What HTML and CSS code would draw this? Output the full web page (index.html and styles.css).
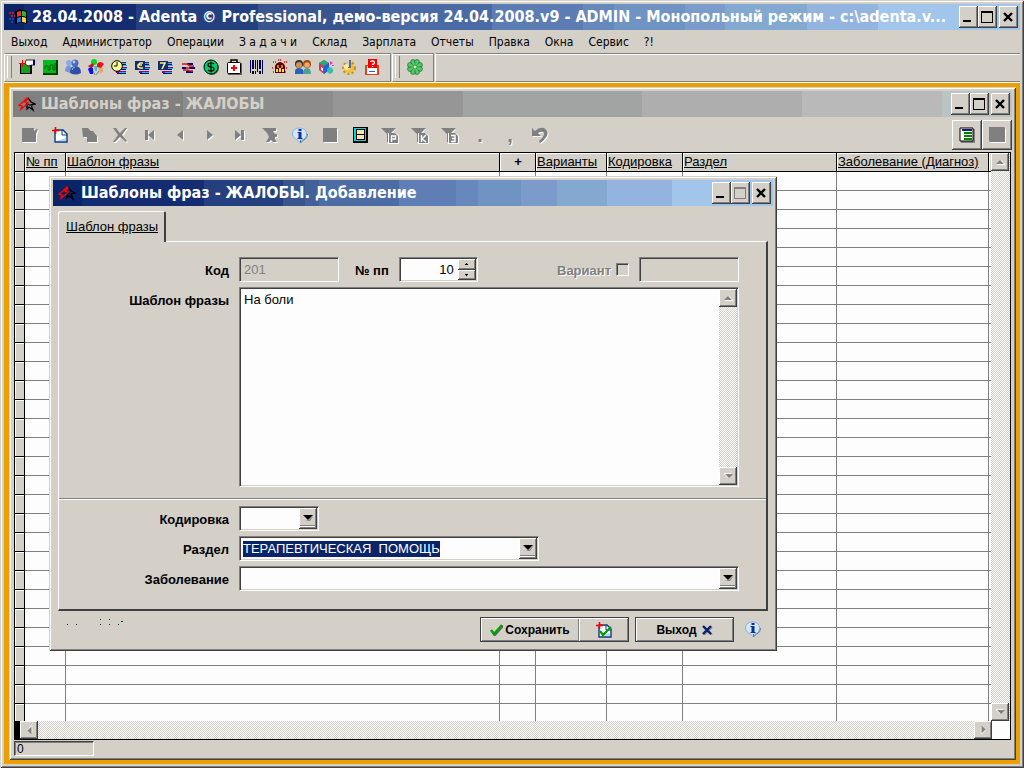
FILE: index.html
```html
<!DOCTYPE html>
<html lang="ru">

<head>
    <meta charset="utf-8">
    <title>Adenta Professional</title>
    <link rel="stylesheet" href="styles.css">
</head>

<body>

<svg class="defs" aria-hidden="true">
    <symbol id="i-min" viewBox="0 0 19 22"><path d="M4 14h8v2H4z"/></symbol>
    <symbol id="i-max" viewBox="0 0 19 22"><path d="M3 5h12v12H3zM4 7v9h10V7z" fill-rule="evenodd"/></symbol>
    <symbol id="i-close" viewBox="0 0 19 22"><path d="M5 7l8 8M13 7l-8 8" stroke="#000" stroke-width="2.4"/></symbol>
    <symbol id="i-logo" viewBox="0 0 18 16"><path d="M10 2l3 4 4 2-4 1 2 5-4-3-2 2V8l3 1" fill="none" stroke="#000" stroke-width="1.3"/><path d="M9 2L5 6 1 9l3 1-1 3 4-3 3-3-3-1 3-3z" fill="none" stroke="#f00" stroke-width="1.4"/></symbol>
    <symbol id="i-up" viewBox="0 0 9 6"><path d="M1 5l4-4 4 4v1H2z" fill="#fff"/><path d="M0 5l4-4 4 4z" fill="#808080"/></symbol>
    <symbol id="i-drop" viewBox="0 0 11 6"><path d="M2 6l4-1 5-5-4 6z" fill="#808080"/><path d="M0 0h10L5 5z"/></symbol>
    <symbol id="i-info" viewBox="0 0 17 17"><path d="M8 1C3 1 1 4 1 7s2 5 5 6l3 3v-3c4 0 6-3 6-6s-2-6-7-6z" fill="#d4e6f8" stroke="#8ab0d8"/><path d="M9 13v3l3-3c3-1 4-4 4-6" fill="none" stroke="#4d7dab"/><path d="M7 2h3v2H7zM6 5h4v6h1v1H6v-1h1V6H6z" fill="#0b2f9c"/></symbol>
    <symbol id="i-newdoc" viewBox="0 0 16 16"><path d="M3 3h8l4 4v8H3z" fill="#fff" stroke="#083c82" stroke-width="1.4"/><path d="M10 3v5h5" fill="none" stroke="#083c82"/><path d="M4 14h10v-3z" fill="#b8d4f0"/><path d="M0 3h7v1H0zM3 0h1v7H3z" fill="#f00" stroke="#f00" stroke-width=".6"/></symbol>
    <symbol id="i-funnel" viewBox="0 0 18 17"><path d="M2 2h13l-5 6v3H8V8z" fill="#fff"/><path d="M0 1h15L9 7v8H6V7z" fill="#808080"/><path d="M7 6h8l3 3v8H7z" fill="#fff"/><path d="M8 6h6l3 3v7H8z" fill="#808080"/></symbol>
    <symbol id="i-stripes" viewBox="0 0 16 16"><path d="M7 3h8v2H7zM6 8h10v2H6zM5 12h10v2H5z" fill="#808"/><path d="M8 4h7v1H8zM8 9h8v1H8zM8 13h7v1H8zM7 6h9v1H7z" fill="#00c8d8"/><path d="M8 5h7v1H8zM8 10h7v1H8zM6 14h9v1H6z" fill="#000080"/></symbol>
</svg>

<div class="window app">
    <div class="title title-app">
        <svg class="title-icon" viewBox="0 0 18 16"><path d="M6 2q5-3 12 0v13q-6-3-12 0z"/><path d="M8 3q2-1 4-1v5q-2 0-4 1z" fill="#f03818"/><path d="M13 2q2 0 4 1v5q-2-1-4-1z" fill="#20b840"/><path d="M8 9q2-1 4-1v5q-2 0-4 1z" fill="#2868f0"/><path d="M13 8q2 0 4 1v5q-2-1-4-1z" fill="#f8d820"/><path d="M0 3h2v2H0zM3 3h2v2H3zM2 6h2v2H2zM5 6h1v2H5z" fill="#b02020"/><path d="M0 9h2v2H0zM3 9h2v2H3zM2 12h2v2H2z" fill="#2040b0"/></svg>
        <h1>28.04.2008 - Adenta © Professional, демо-версия 24.04.2008.v9 - ADMIN - Монопольный режим - c:\adenta.v...</h1>
        <div class="title-buttons">
            <button aria-label="Свернуть"><svg><use href="#i-min"/></svg></button>
            <button aria-label="Развернуть"><svg><use href="#i-max"/></svg></button>
            <button class="close" aria-label="Закрыть"><svg><use href="#i-close"/></svg></button>
        </div>
    </div>

    <nav class="menu">
        <button>Выход</button>
        <button>Администратор</button>
        <button>Операции</button>
        <button>З а д а ч и</button>
        <button>Склад</button>
        <button>Зарплата</button>
        <button>Отчеты</button>
        <button>Правка</button>
        <button>Окна</button>
        <button>Сервис</button>
        <button>?!</button>
    </nav>

    <div class="bars">
        <div class="bar">
            <button aria-label="Выбор"><svg viewBox="0 0 16 16"><path d="M1 4h12v11H1z" fill="#000"/><path d="M2 5h9v9H2z" fill="#18a018"/><path d="M7 1h9v5h-3l-4 1-3-2z" fill="#fff" stroke="#000" stroke-width=".8"/><path d="M14 1h2v5h-2z" fill="#000080"/><path d="M0 4h7v1H0zM3 1h1v7H3z" fill="#f00"/></svg></button>
            <button aria-label="Монитор"><svg viewBox="0 0 16 16"><path d="M1 1h15v15H1z" fill="#004000"/><path d="M1 1h13v13H1z" fill="#00b820"/><path d="M3 10V7h3v4h2V6h3v5h2V4" fill="none" stroke="#006000"/></svg></button>
            <button aria-label="Пациенты"><svg viewBox="0 0 16 16"><circle cx="4" cy="4" r="3" fill="#8cabe8"/><path d="M0 12q0-6 5-5l3 3-3 4z" fill="#7396dc"/><circle cx="10" cy="4" r="3.5" fill="#486cbd"/><path d="M5 14q0-7 5-7 6 0 6 7-5 3-11 0z" fill="#3050a8"/><circle cx="9" cy="3" r="1.4" fill="#b8cdf8"/><path d="M7 11q1-3 3-3" stroke="#a8c0f0" fill="none"/></svg></button>
            <button aria-label="Праздники"><svg viewBox="0 0 16 16"><path d="M5 12l2 4M11 12l-3 4" stroke="#808080"/><ellipse cx="6" cy="3" rx="3" ry="3" fill="#00d820"/><path d="M9 5q3-4 7 0l-3 4-4-1z" fill="#f01010"/><path d="M0 7l5-3 1 3-3 2z" fill="#d01010"/><path d="M0 10q2-3 5-1v6H2z" fill="#1010e8"/><path d="M10 9h5v4l-3 2z" fill="#e8a870"/><path d="M6 7h3v5H7z" fill="#40c0e0"/></svg></button>
            <button aria-label="Расписание"><svg viewBox="0 0 16 16"><use href="#i-stripes"/><circle cx="6" cy="7" r="5.3" fill="#ffff90" stroke="#000"/><path d="M6 3v4H3" stroke="#000" fill="none"/></svg></button>
            <button aria-label="Смены"><svg viewBox="0 0 16 16"><use href="#i-stripes"/><path d="M1 2h10v9H1z" fill="#103070"/><path d="M9 4H6L4 6v2l2 1h3M4 6h4" fill="none" stroke="#fff080" stroke-width="1.5"/></svg></button>
            <button aria-label="Неделя"><svg viewBox="0 0 16 16"><use href="#i-stripes"/><path d="M1 2h10v9H1z" fill="#103070"/><path d="M3 4h5L5 10" fill="none" stroke="#fff080" stroke-width="1.6"/></svg></button>
            <button aria-label="Перемещения"><svg viewBox="0 0 16 16"><path d="M7 4h6v2H7zM9 8h6v2H9zM2 8h4v2H2zM6 12h7v2H6z" fill="#000080"/><path d="M2 5h5l3 2h4M3 11h4l3 1h3M6 9h4" fill="none" stroke="#d01818" stroke-width="1.600"/></svg></button>
            <button aria-label="Касса"><svg viewBox="0 0 16 16"><circle cx="9" cy="9" r="7" fill="#606060"/><circle cx="8" cy="8" r="7" fill="#00d070" stroke="#000"/><path d="M11 5q-1-1-3-1-3 0-3 2t3 2 3 2-3 2q-2 0-3-1M8 2.500v11" fill="none" stroke="#000" stroke-width="1.200"/></svg></button>
            <button aria-label="Аптечка"><svg viewBox="0 0 16 16"><path d="M2 4h14v12H2z" fill="#606060"/><path d="M5 4V1h6v3" fill="none" stroke="#000" stroke-width="1.500"/><rect x="1.500" y="3.500" width="13" height="11" rx="1" fill="#fff" stroke="#000"/><path d="M7 6h2v2h2v2H9v2H7v-2H5V8h2z" fill="#f00"/></svg></button>
            <button aria-label="Штрих-код"><svg viewBox="0 0 16 16"><path d="M1 1h1v13H1zM3 1h2v9H3zM6 1h1v9H6zM8 1h1v12H8zM10 1h2v9h-2zM13 1h1v14h-1z" fill="#000060"/><path d="M3 12h2v3H3zM6 12h1v3H6zM10 12h2v3h-2z"/></svg></button>
            <button aria-label="Склад"><svg viewBox="0 0 16 16"><path d="M1 3h3M6 1h4M12 3h3M0 9h2M14 9h2M1 13h2M13 13h2" stroke="#f00" stroke-dasharray="1 1" stroke-width="1.400"/><path d="M3 8q0-4 5-5 5 1 5 5v6H3z" fill="#500"/><path d="M5 6h2v3H5zM9 6h2v3H9z" fill="#e07020"/><path d="M4 10h2v3H4zM7 9h2v4H7zM10 10h2v3h-2z" fill="#ffe030"/></svg></button>
            <button aria-label="Персонал"><svg viewBox="0 0 16 16"><circle cx="4" cy="5" r="4" fill="#303030"/><circle cx="4" cy="6" r="3" fill="#d89050"/><path d="M0 15q-1-6 4-6t5 6z" fill="#2860c0"/><circle cx="12" cy="5" r="4" fill="#984818"/><circle cx="12" cy="6" r="2.800" fill="#f0a860"/><path d="M8 15q0-6 4-6t4 6z" fill="#50a090"/></svg></button>
            <button aria-label="Справочники"><svg viewBox="0 0 16 16"><path d="M1 4l5-3 5 3v7l-5 4-5-4z" fill="#e03050"/><path d="M1 4l5 3 5-3-5-3z" fill="#20b070"/><path d="M6 7l5-3v7l-5 4z" fill="#2060e0"/><path d="M9 10l3-2 3 2v3l-3 2-3-2z" fill="#30c0a0"/><path d="M12 2l3 2-3 2zM14 6h2v1h-2z" fill="#f030d0"/><path d="M3 8l2 1v3l-2-1z" fill="#fff"/></svg></button>
            <button aria-label="Настройки"><svg viewBox="0 0 16 16"><circle cx="8" cy="9" r="5.500" fill="none" stroke="#c89010" stroke-width="3" stroke-dasharray="2 2"/><circle cx="8" cy="9" r="5" fill="#f4c038"/><circle cx="6" cy="8" r="3" fill="#ffeaa0"/><path d="M7 1h3v8H7z" fill="#606878"/><path d="M7 1h1v7H7z" fill="#d0d8e0"/></svg></button>
            <button aria-label="Вопрос"><svg viewBox="0 0 16 16"><path d="M1 6h14v10H1z" fill="#e04020"/><path d="M3 7h10v8H3z" fill="#fff"/><path d="M5 12h6v1H5z" fill="#3060d0"/><path d="M4 0h9v9H4z" fill="#f00000"/><path d="M6.500 3q0-1 2-1t2 1.500-2 2V6M8.500 7v1" fill="none" stroke="#fff" stroke-width="1.300"/></svg></button>
        </div>
        <div class="bar">
            <button aria-label="Клевер"><svg viewBox="0 0 16 16"><g fill="#58c870" stroke="#187830" stroke-width=".8"><circle cx="6" cy="3" r="2.400"/><circle cx="10" cy="3" r="2.400"/><circle cx="13" cy="6" r="2.400"/><circle cx="13" cy="10" r="2.400"/><circle cx="10" cy="13" r="2.400"/><circle cx="6" cy="13" r="2.400"/><circle cx="3" cy="10" r="2.400"/><circle cx="3" cy="6" r="2.400"/></g><circle cx="8" cy="8" r="4.500" fill="#58c870"/><path d="M8 3v10M3 8h10M4 4l8 8M12 4l-8 8" stroke="#208838" stroke-width=".6"/><circle cx="8" cy="8" r="1.300" fill="#ffff80"/></svg></button>
        </div>
        <div class="bar rest"></div>
    </div>

    <main class="mdi">
        <section class="window child">
            <div class="title title-inactive">
                <svg class="title-icon"><use href="#i-logo"/></svg>
                <h2>Шаблоны фраз - ЖАЛОБЫ</h2>
                <div class="title-buttons">
                    <button aria-label="Свернуть"><svg><use href="#i-min"/></svg></button>
                    <button aria-label="Развернуть"><svg><use href="#i-max"/></svg></button>
                    <button class="close" aria-label="Закрыть"><svg><use href="#i-close"/></svg></button>
                </div>
            </div>

            <div class="tools">
                <button aria-label="Изменить"><svg class="gray" viewBox="0 0 16 16"><path d="M0 1h12v3l3-2h1l-2 5v8H0z"/></svg></button>
                <button aria-label="Добавить"><svg viewBox="0 0 16 16"><use href="#i-newdoc"/></svg></button>
                <button aria-label="Копировать"><svg class="gray" viewBox="0 0 16 16"><path d="M0 1h6l3 3h2l4 5v6H5v-5H1z"/></svg></button>
                <button aria-label="Удалить"><svg class="gray" viewBox="0 0 16 16"><path d="M1 1h3l4 5 5-5h2L10 8l5 6-1 1-6-5-5 5H1l5-7z"/></svg></button>
                <button aria-label="Первая"><svg class="gray" viewBox="0 0 16 16"><path d="M3 3h3v10H3zM12 3v10L6 8z"/></svg></button>
                <button aria-label="Предыдущая"><svg class="gray" viewBox="0 0 16 16"><path d="M11 3v10L5 8z"/></svg></button>
                <button aria-label="Следующая"><svg class="gray" viewBox="0 0 16 16"><path d="M5 3v10l6-5z"/></svg></button>
                <button aria-label="Последняя"><svg class="gray" viewBox="0 0 16 16"><path d="M3 3v10l6-5zM9 3h3v10H9z"/></svg></button>
                <button aria-label="Снять фильтр"><svg class="gray" viewBox="0 0 16 16"><path d="M0 1h14v3h-3l2 3h2v3h-2v2l2 3h-4l-2-2-2 2H4l3-5-2-4z"/></svg></button>
                <button aria-label="Справка"><svg class="wide"><use href="#i-info"/></svg></button>
                <button aria-label="Стоп"><svg class="gray" viewBox="0 0 16 16"><path d="M1 1h14v14H1z"/></svg></button>
                <button aria-label="Карточка"><svg viewBox="0 0 16 16"><path d="M1 0h15v16H1z"/><path d="M2 1h12v13H2z" fill="#00d8d8"/><path d="M4 2h9v11H4z"/><path d="M5 3h7v4H5zM5 8h7v4H5z" fill="#ffe0b0"/></svg></button>
                <button aria-label="Фильтр по разделу"><svg class="wide" viewBox="0 0 18 17"><use href="#i-funnel"/><path d="M10.500 15V9h4v3h-4" fill="none" stroke="#fff" stroke-width="1.400"/></svg></button>
                <button aria-label="Фильтр по кодировке"><svg class="wide" viewBox="0 0 18 17"><use href="#i-funnel"/><path d="M10.500 8v7M15 8l-4 4 4 3" fill="none" stroke="#fff" stroke-width="1.400"/></svg></button>
                <button aria-label="Фильтр по заболеванию"><svg class="wide" viewBox="0 0 18 17"><use href="#i-funnel"/><path d="M10 8.500h4v6h-4M11 11.500h3" fill="none" stroke="#fff" stroke-width="1.400"/></svg></button>
                <button class="mark">.</button>
                <button class="mark">,</button>
                <button aria-label="Отменить"><svg class="gray" viewBox="0 0 16 16"><path d="M0 1l3 3q4-4 9-3 5 3 3 8l-4 5-3 2-1-2q5-4 5-7 0-4-6-1l3 3H0z"/></svg></button>
                <div class="spacer"></div>
                <button class="raised" aria-label="Список"><svg viewBox="0 0 16 16"><path d="M2 2h14v14H2z" fill="#808080"/><path d="M1 1h13v13H1z" fill="#fff" stroke="#000"/><path d="M3 2h10v2H3z" fill="#102070"/><path d="M5 5h8v2H5zM5 8h8v2H5zM5 11h8v2H5z" fill="#008000"/></svg></button>
                <button class="raised" aria-label="Вид"><svg class="gray" viewBox="0 0 16 16"><path d="M0 0h15l1 1v14H1l-1-1z"/></svg></button>
            </div>

            <div class="grid">
                <div class="grid-main">
                    <div class="grid-body">
                        <table>
                            <colgroup>
                                <col class="c-mark"><col class="c-num"><col><col class="c-plus"><col class="c-var"><col class="c-code"><col class="c-part"><col class="c-diag"><col class="c-end">
                            </colgroup>
                            <thead>
                                <tr>
                                    <th></th>
                                    <th>№ пп</th>
                                    <th>Шаблон фразы</th>
                                    <th class="plus">+</th>
                                    <th>Варианты</th>
                                    <th>Кодировка</th>
                                    <th>Раздел</th>
                                    <th>Заболевание (Диагноз)</th>
                                    <th class="end"></th>
                                </tr>
                            </thead>
                            <tbody id="rows"></tbody>
                        </table>
                    </div>
                    <div class="vscroll">
                        <button aria-label="Вверх"><svg class="arrow"><use href="#i-up"/></svg></button>
                        <button aria-label="Вниз"><svg class="arrow down"><use href="#i-up"/></svg></button>
                    </div>
                </div>
                <div class="hscroll">
                    <button aria-label="Влево"><svg class="arrow left"><use href="#i-up"/></svg></button>
                    <button aria-label="Вправо"><svg class="arrow right"><use href="#i-up"/></svg></button>
                </div>
            </div>

            <div class="status"><span>0</span></div>
        </section>
    </main>
</div>

<form class="window dialog" onsubmit="return false">
    <div class="title title-dialog">
        <svg class="title-icon"><use href="#i-logo"/></svg>
        <h2>Шаблоны фраз - ЖАЛОБЫ. Добавление</h2>
        <div class="title-buttons">
            <button type="button" aria-label="Свернуть"><svg><use href="#i-min"/></svg></button>
            <button type="button" class="off" aria-label="Развернуть" disabled><svg><use href="#i-max"/></svg></button>
            <button type="button" class="close" aria-label="Закрыть"><svg><use href="#i-close"/></svg></button>
        </div>
    </div>

    <div class="dialog-body">
        <button type="button" class="tab">Шаблон фразы</button>
        <div class="page">
            <div class="fields">
                <label for="code">Код</label>
                <div class="line">
                    <input class="field short" id="code" value="201" disabled>
                    <label class="label-num" for="num">№ пп</label>
                    <div class="field spin">
                        <input id="num" value="10">
                        <div class="spin-buttons">
                            <button type="button" aria-label="Больше"><svg viewBox="0 0 3 2"><path d="M1 0h1v1h1v1H0V1h1z"/></svg></button>
                            <button type="button" aria-label="Меньше"><svg viewBox="0 0 3 2"><path d="M0 0h3v1H2v1H1V1H0z"/></svg></button>
                        </div>
                    </div>
                    <label class="label-off" for="variant">Вариант</label>
                    <input type="checkbox" id="variant" disabled>
                    <input class="field short" aria-label="Номер варианта" disabled>
                </div>

                <label for="phrase">Шаблон фразы</label>
                <div class="field memo">
                    <textarea id="phrase">На боли</textarea>
                    <div class="vscroll">
                        <button type="button" aria-label="Вверх"><svg class="arrow"><use href="#i-up"/></svg></button>
                        <button type="button" aria-label="Вниз"><svg class="arrow down"><use href="#i-up"/></svg></button>
                    </div>
                </div>
            </div>

            <div class="fields second">
                <label for="coding">Кодировка</label>
                <div class="field combo combo-small">
                    <select id="coding"><option></option></select>
                    <span class="drop"><svg><use href="#i-drop"/></svg></span>
                </div>

                <label for="part">Раздел</label>
                <div class="field combo combo-medium">
                    <select id="part" class="selected"><option>ТЕРАПЕВТИЧЕСКАЯ&nbsp; ПОМОЩЬ</option></select>
                    <span class="drop"><svg><use href="#i-drop"/></svg></span>
                </div>

                <label for="disease">Заболевание</label>
                <div class="field combo">
                    <select id="disease"><option></option></select>
                    <span class="drop"><svg><use href="#i-drop"/></svg></span>
                </div>
            </div>
        </div>

        <div class="actions">
            <svg class="dots" viewBox="0 0 60 8"><path d="M0 6h1v1H0zM9 6h1v1H9zM33 1h1v1h-1zM33 6h1v1h-1zM42 1h1v1h-1zM42 6h1v1h-1zM51 6h1v1h-1zM54 3h2v1h-2z" fill="#004040"/></svg>
            <div class="button-group">
                <button type="submit" class="save"><svg viewBox="0 0 13 12"><path d="M2 7l3 4 8-9" fill="none" stroke="#606060" stroke-width="2"/><path d="M1 6l3 4 8-9" fill="none" stroke="#00a000" stroke-width="2.400"/></svg>Сохранить</button>
                <button type="button" class="save-new" aria-label="Сохранить и добавить"><svg viewBox="0 0 16 16"><use href="#i-newdoc"/><path d="M4 9l3 4 8-8" fill="none" stroke="#00a000" stroke-width="2.200"/></svg></button>
            </div>
            <div class="button-group">
                <button type="button" class="exit">Выход<svg viewBox="0 0 11 10"><path d="M2 2l8 8M10 2l-8 8" stroke="#909090" stroke-width="2"/><path d="M1 1l8 8M9 1L1 9" stroke="#082070" stroke-width="2.400"/></svg></button>
            </div>
            <button type="button" class="help" aria-label="Справка"><svg class="wide"><use href="#i-info"/></svg></button>
        </div>
    </div>
</form>

<script>
    // empty rows of the list
    let rowsHTML = '';
    for (let i = 0; i < 29; i++) {
        rowsHTML += '<tr>' + '<td></td>'.repeat(9) + '</tr>\n';
    }
    document.getElementById("rows").innerHTML = rowsHTML;
</script>

</body>

</html>
```
FILE: styles.css
```css
* {
    box-sizing: border-box;
}

body {
    margin: 0;
    height: 100vh;
    overflow: hidden;
    background: #d4d0c8;
    color: #000;
    font-family: "Liberation Sans", Arial, sans-serif;
    font-size: 13px;
}

button,
input,
select,
textarea {
    font: inherit;
    color: inherit;
    border: none;
    border-radius: 0;
    margin: 0;
    padding: 0;
    background: none;
    outline: none;
}

svg {
    display: block;
    flex: none;
}

.defs {
    display: none;
}

/* Windows */
.window {
    display: flex;
    flex-direction: column;
    padding: 4px;
    background: #d4d0c8;
    box-shadow: inset 1px 1px #d4d0c8, inset -1px -1px #404040, inset 2px 2px #fff, inset -2px -2px #808080;
}

.app {
    height: 100vh;
}

.title {
    display: flex;
    align-items: center;
    flex: none;
    height: 26px;
    padding: 0 2px 0 5px;
    color: #fff;
}

.title h1,
.title h2 {
    flex: 1;
    min-width: 0;
    margin: 0 0 0 5px;
    font-family: "DejaVu Sans Condensed", "DejaVu Sans", Tahoma, sans-serif;
    font-size: 16px;
    line-height: 26px;
    white-space: nowrap;
    overflow: hidden;
}

.title-app {
    background: linear-gradient(90deg, #0a246a 2%, #132c72 2% 13%, #25407f 13% 25%, #38558f 25% 35%, #42619a 35% 38%, #4a6aa5 38% 48%, #5c7db4 48% 57%, #6688bc 57% 60%, #6f93c2 60% 67%, #7b9cca 67% 71%, #83a9d0 71% 79%, #94b4e0 79% 86%, #a2c5eb 86%);
}

.title-inactive {
    background: linear-gradient(90deg, #808080 17%, #8c8c8c 17% 32%, #969696 32% 45%, #a2a4a3 45% 63%, #aeaeae 63% 79%, #b9b9b9 79% 93%, #bac4c4 93%);
    color: #d4d0c8;
}

.title-dialog {
    background: linear-gradient(90deg, #0a246a 4%, #142c72 4% 21%, #254080 21% 32%, #38558f 32% 35%, #42619a 35% 37%, #4c6ca4 37% 48%, #5e7eb5 48% 56%, #6688bc 56% 59%, #6f93c2 59% 65%, #7b9cca 65% 70%, #83a9d0 70% 77%, #94b4e0 77% 86%, #a2c5eb 86%);
}

.title-icon {
    width: 18px;
    height: 16px;
}

.title-buttons {
    display: flex;
}

.title-buttons button,
.raised,
.vscroll button,
.hscroll button,
.drop,
.spin-buttons button {
    background: #d4d0c8;
    box-shadow: inset -1px -1px #404040, inset 1px 1px #fff, inset -2px -2px #808080;
}

.title-buttons button,
.title-buttons svg {
    width: 19px;
    height: 22px;
}

.title-buttons .close {
    margin-left: 2px;
}

.title-buttons .off {
    fill: #808080;
}

/* Menu and main toolbar */
.menu {
    display: flex;
    flex: none;
    gap: 15px;
    height: 23px;
    padding: 0 7px;
    font-family: "DejaVu Sans Condensed", "DejaVu Sans", Tahoma, sans-serif;
    font-size: 12px;
}

.bars {
    display: flex;
    flex: none;
    gap: 1px;
    height: 30px;
    border-bottom: 1px solid #fff;
}

.bar {
    display: flex;
    align-items: center;
    padding: 0 7px 2px 8px;
    border: 1px solid #808080;
    border-left-color: #fff;
    box-shadow: inset 0 1px #fff;
}

.bar::before {
    content: "";
    width: 3px;
    height: 22px;
    margin: 0 3px 0 -6px;
    border-left: 1px solid #fff;
    border-right: 1px solid #808080;
}

.bar button {
    display: flex;
    align-items: center;
    justify-content: center;
    width: 23px;
    height: 24px;
}

.bar svg,
.tools svg,
.save-new svg {
    width: 16px;
    height: 16px;
}

.bar.rest {
    flex: 1;
    border-right: none;
}

.bar.rest::before {
    display: none;
}

/* Work area */
.mdi {
    display: flex;
    flex: 1;
    min-height: 0;
    padding: 4px 4px 4px 5px;
    background: #eca000;
}

.child {
    flex: 1;
    min-width: 0;
}

.tools {
    display: flex;
    flex: none;
    padding: 3px 0 2px 2px;
}

.tools button {
    display: flex;
    align-items: center;
    justify-content: center;
    width: 30px;
    height: 30px;
}

.tools .wide,
.help .wide {
    width: 18px;
    height: 17px;
}

.spacer {
    flex: 1;
}

.gray {
    fill: #808080;
    filter: drop-shadow(1px 1px #fff);
}

.tools .mark {
    color: #808080;
    font-size: 20px;
    font-weight: bold;
    text-shadow: 1px 1px #fff;
}

/* List */
.grid {
    display: flex;
    flex-direction: column;
    flex: 1;
    min-height: 0;
    margin: 0 1px;
    border: 1px solid #000;
    background: #fdfdfd;
}

.grid-main {
    display: flex;
    flex: 1;
    min-height: 0;
}

.grid-body {
    flex: 1;
    min-width: 0;
    overflow: hidden;
}

table {
    width: 100%;
    table-layout: fixed;
    border-spacing: 0;
}

.c-mark {
    width: 10px;
}

.c-num {
    width: 41px;
}

.c-plus {
    width: 36px;
}

.c-var {
    width: 71px;
}

.c-code {
    width: 76px;
}

.c-part {
    width: 154px;
}

.c-diag {
    width: 152px;
}

.c-end {
    width: 2px;
}

th,
td {
    height: 19px;
    padding: 0 0 0 1px;
    border-right: 1px solid #808080;
    border-bottom: 1px solid #808080;
}

th {
    border-color: #000;
    background: #d4d0c8;
    box-shadow: inset 1px 1px #fff;
    font-weight: normal;
    line-height: 18px;
    text-align: left;
    text-decoration: underline;
    white-space: nowrap;
}

th.plus {
    font-weight: bold;
    text-align: center;
    text-decoration: none;
}

td:first-child {
    border-color: #000;
    background: #d4d0c8;
    box-shadow: inset 1px 1px #fff;
}

td:last-child,
th.end {
    padding: 0;
    border-right: none;
}

/* Scroll bars */
.vscroll,
.hscroll {
    display: flex;
    flex: none;
    justify-content: space-between;
    background: repeating-conic-gradient(#d4d0c8 0 25%, #fff 0 50%) 0 0 / 2px 2px;
}

.vscroll {
    flex-direction: column;
    width: 19px;
}

.hscroll {
    height: 18px;
    border-left: 5px solid #000;
    border-right: 18px solid #fdfdfd;
}

.vscroll button,
.hscroll button {
    display: flex;
    align-items: center;
    justify-content: center;
    width: 18px;
    height: 18px;
}

.arrow {
    width: 9px;
    height: 6px;
}

.down {
    transform: rotate(180deg);
}

.left {
    transform: rotate(-90deg);
}

.right {
    transform: rotate(90deg);
}

.status {
    flex: none;
    padding: 1px 1px 0;
}

.status span {
    display: block;
    width: 80px;
    height: 15px;
    padding-left: 2px;
    border: 1px solid #fff;
    border-top-color: #404040;
    border-left-color: #404040;
    box-shadow: inset 1px 1px #808080;
    font-size: 12px;
    line-height: 14px;
}

/* Dialog */
.dialog {
    position: absolute;
    left: 49px;
    top: 176px;
    width: 728px;
}

.dialog-body {
    padding: 5px;
}

.tab {
    display: block;
    position: relative;
    height: 31px;
    margin-bottom: -1px;
    padding: 0 6px 2px 7px;
    border: 1px solid #fff;
    border-right: 2px solid #404040;
    border-bottom: none;
    border-radius: 3px 2px 0 0;
    background: #d4d0c8;
    text-decoration: underline;
}

.page {
    border: 1px solid #fff;
    border-right: 2px solid #404040;
    border-bottom: 2px solid #404040;
}

.fields {
    display: grid;
    grid-template-columns: 170px 1fr;
    gap: 5px 10px;
    padding: 15px 27px 11px 0;
}

.fields.second {
    padding: 7px 27px 18px 0;
    border-top: 1px solid #808080;
    box-shadow: inset 0 1px #fff;
}

.fields label {
    padding-top: 2px;
    font-weight: bold;
    line-height: 23px;
    text-align: right;
}

.line {
    display: flex;
    align-items: center;
}

.field {
    height: 25px;
    border: 1px solid #808080;
    border-right-color: #fff;
    border-bottom-color: #fff;
    background: #fdfdfd;
    box-shadow: inset 1px 1px #404040, inset -1px -1px #d4d0c8;
}

.short {
    width: 100px;
    padding: 0 4px;
}

.field:disabled {
    background: #d4d0c8;
    color: #808080;
}

.label-num {
    margin: 0 10px 0 16px;
}

.spin {
    display: flex;
    width: 79px;
    padding: 1px;
}

.spin > input {
    flex: 1;
    min-width: 0;
    padding-right: 4px;
    text-align: right;
}

.spin-buttons {
    display: flex;
    flex-direction: column;
    width: 18px;
}

.spin-buttons button {
    display: flex;
    flex: 1;
    align-items: center;
    justify-content: center;
}

.spin-buttons svg {
    width: 3px;
    height: 2px;
}

.fields .label-off {
    margin: 0 5px 0 auto;
    color: #808080;
    text-shadow: 1px 1px #fff;
}

input[type="checkbox"] {
    appearance: none;
    width: 13px;
    height: 13px;
    margin-right: 10px;
    border: 1px solid #808080;
    border-right-color: #fff;
    border-bottom-color: #fff;
    box-shadow: inset 1px 1px #404040;
}

.memo {
    display: flex;
    height: 200px;
    padding: 1px;
}

.memo textarea {
    flex: 1;
    padding: 3px;
    resize: none;
    overflow: hidden;
}

.memo .vscroll {
    width: 18px;
}

.combo {
    display: flex;
    align-items: center;
    justify-content: space-between;
    padding: 1px 1px 1px 3px;
}

.combo-small {
    width: 80px;
}

.combo-medium {
    width: 300px;
}

.combo select {
    appearance: none;
    min-width: 40px;
    height: 16px;
}

.combo .selected {
    background: #0a246a;
    color: #fff;
}

.drop {
    display: flex;
    justify-content: center;
    width: 18px;
    height: 21px;
    padding-top: 7px;
    pointer-events: none;
}

/* strip under the arrow */
.drop {
    background: linear-gradient(#d4d0c8 17px, #808080 17px 18px, #fff 18px 19px, #d4d0c8 19px);
}

.drop svg {
    width: 11px;
    height: 6px;
}

.actions {
    display: flex;
    align-items: center;
    padding: 6px 6px 0 9px;
}

.dots {
    width: 60px;
    height: 8px;
    margin: 0 auto 16px 0;
}

.button-group {
    display: flex;
    margin-right: 6px;
    border: 1px solid #404040;
}

.button-group button {
    display: flex;
    align-items: center;
    justify-content: center;
    height: 23px;
    box-shadow: inset 1px 1px #fff, inset -1px -1px #808080;
    font-size: 12px;
    font-weight: bold;
}

.button-group .save {
    width: 98px;
    gap: 2px;
}

.save svg {
    width: 13px;
    height: 12px;
}

.save-new {
    width: 49px;
}

.button-group .exit {
    width: 97px;
    gap: 5px;
}

.exit svg {
    width: 11px;
    height: 10px;
}

.help {
    margin-left: 4px;
}
```
